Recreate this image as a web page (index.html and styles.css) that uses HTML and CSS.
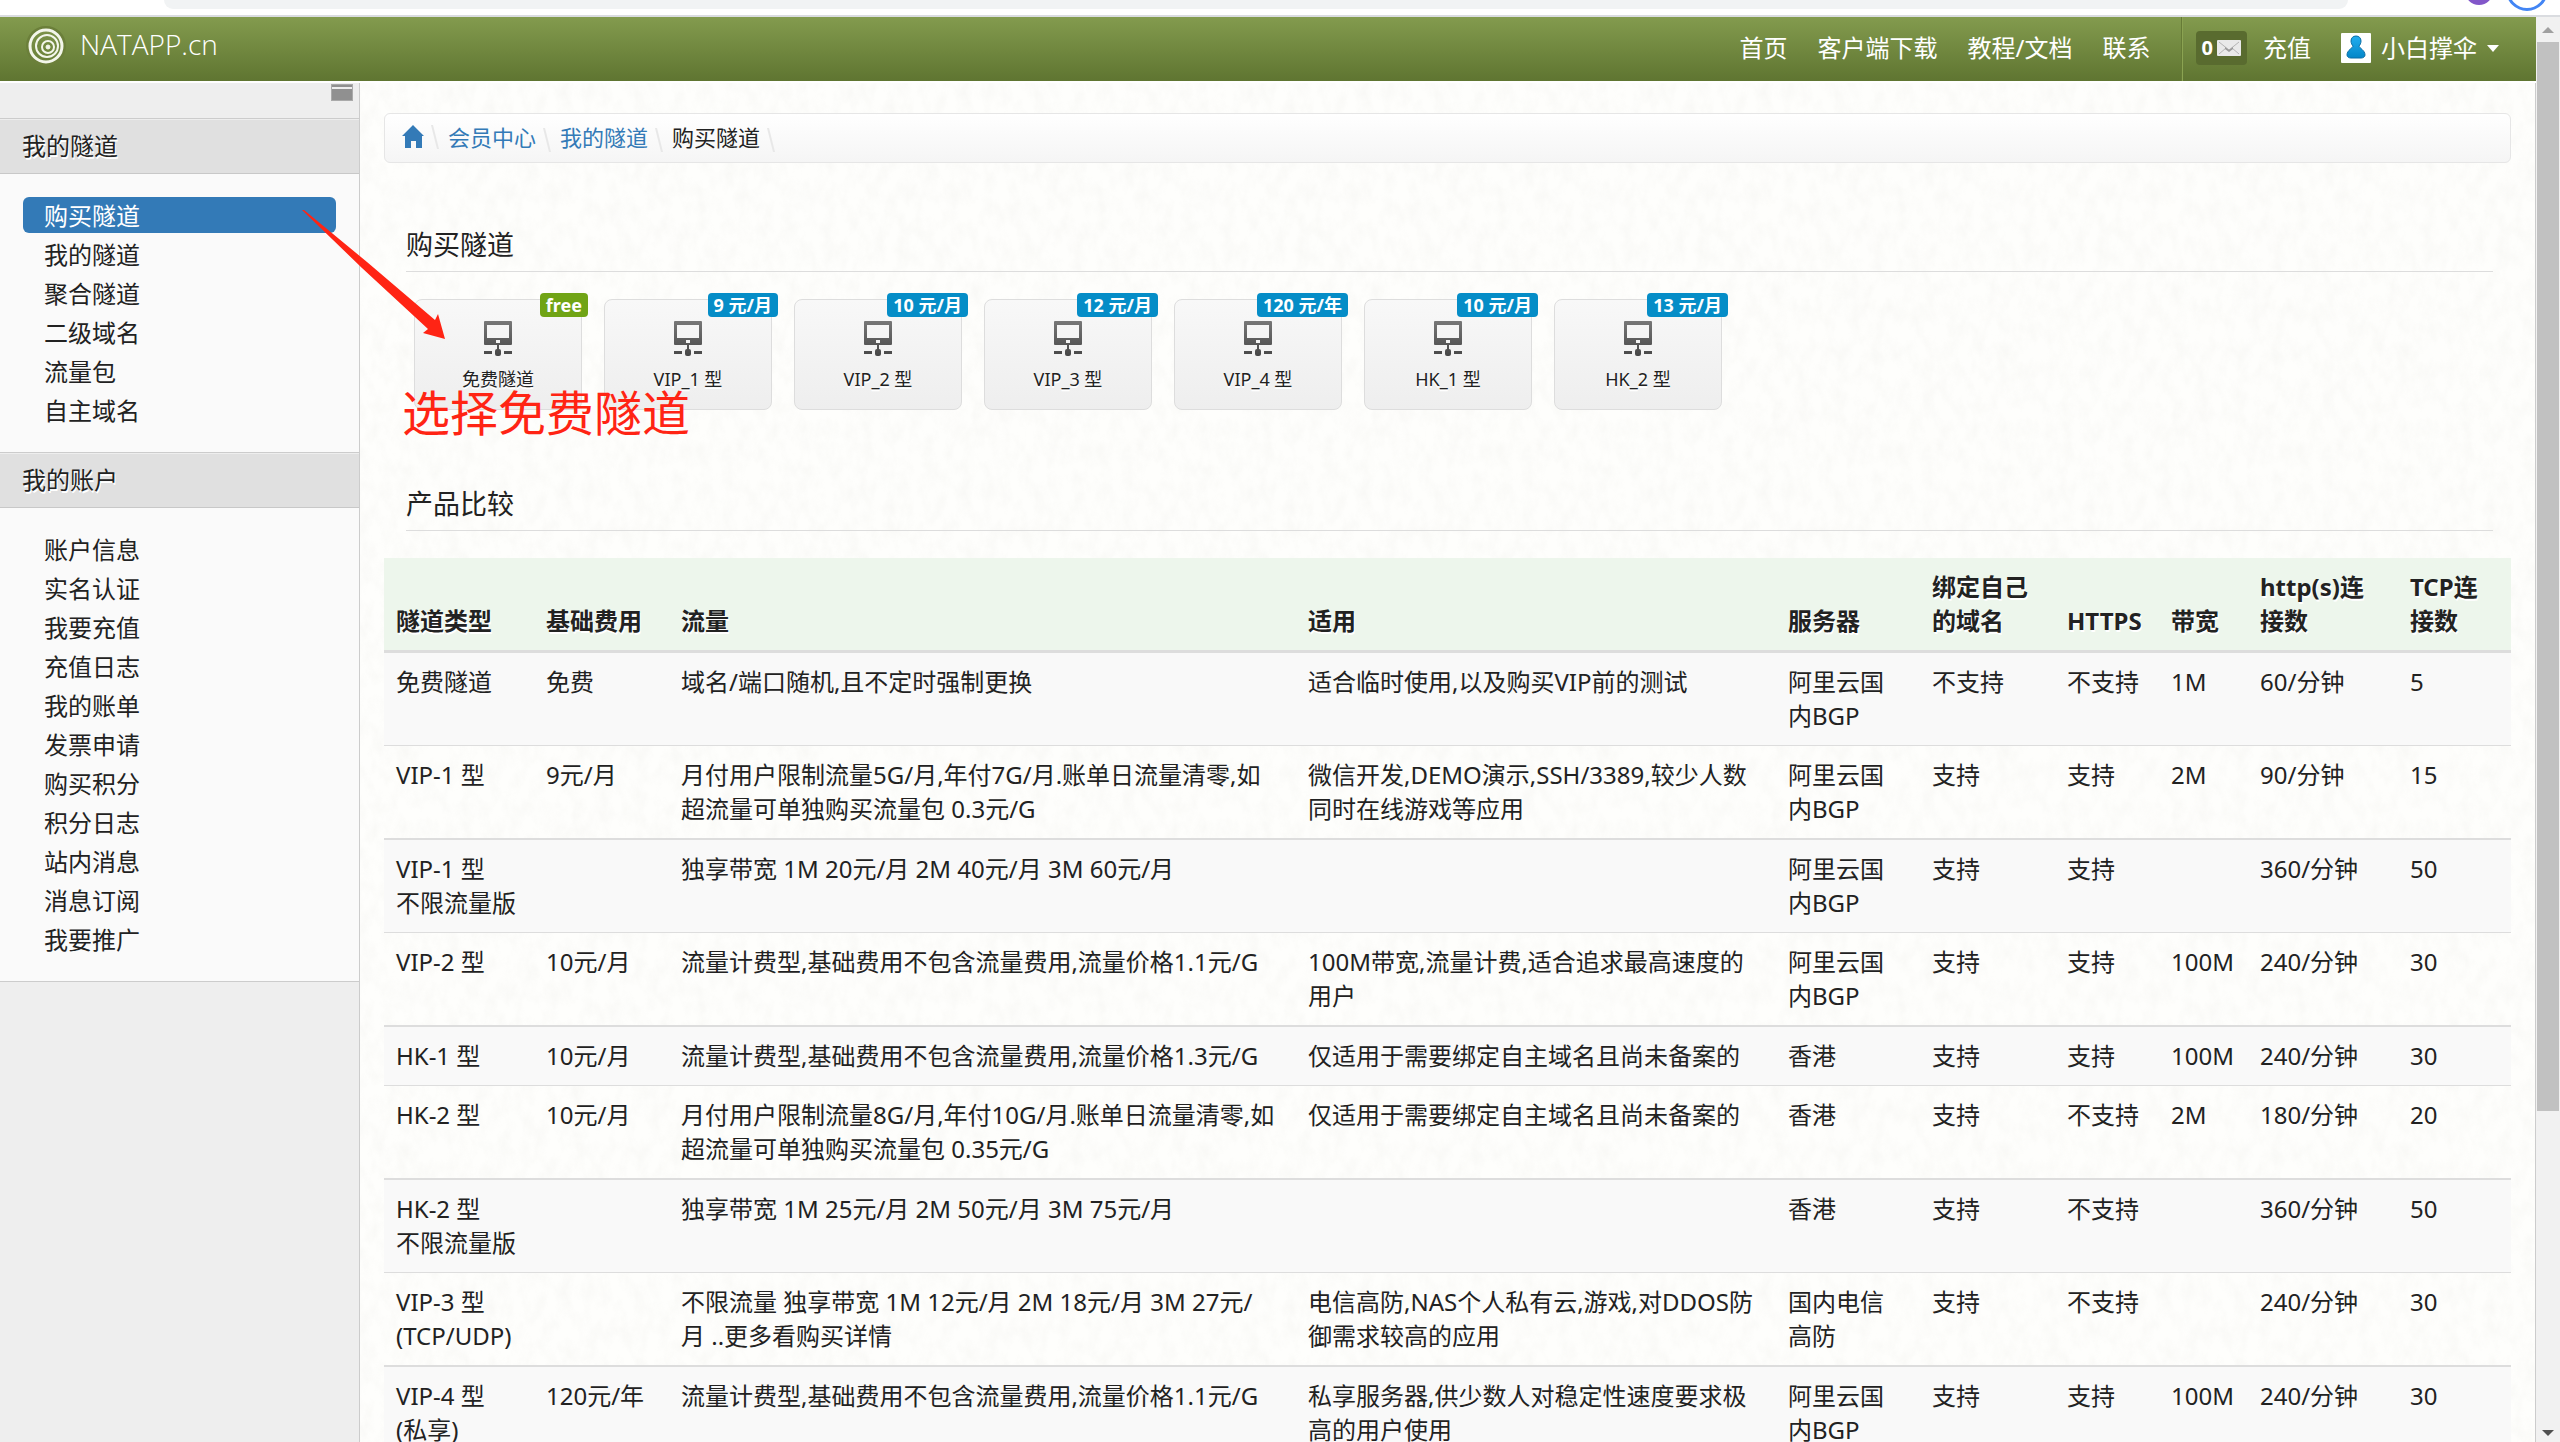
FILE: index.html
```html
<!DOCTYPE html>
<html lang="zh-CN">
<head>
<meta charset="utf-8">
<title>NATAPP.cn</title>
<link rel="stylesheet" href="styles.css">
</head>
<body>
<svg class="defs" width="0" height="0" aria-hidden="true">
  <defs>
    <linearGradient id="steel" x1="0" y1="0" x2="0" y2="1"><stop offset="0" stop-color="#777"/><stop offset="1" stop-color="#484848"/></linearGradient>
    <linearGradient id="blue" x1="0" y1="0" x2="0" y2="1"><stop offset="0" stop-color="#22aef0"/><stop offset="1" stop-color="#0486c8"/></linearGradient>
    <symbol id="monitor" viewBox="0 0 30 36">
      <path fill="url(#steel)" fill-rule="evenodd" d="M2 0h26q1 0 1 1v22q0 1-1 1H16v4q2 0 2 2v3q0 2-2 2h-2q-2 0-2-2v-3q0-2 2-2v-4H2q-1 0-1-1V1q0-1 1-1zM4 4v13h22V4zM13 19v3h4v-3zM1 30h8v3H1zM21 30h8v3h-8z"/>
    </symbol>
  </defs>
</svg>
<div class="browser-bar" aria-hidden="true"><div class="address"></div><span class="ext"></span><span class="profile"></span></div>
<div class="viewport">
  <div class="page">
    <header class="navbar">
      <a class="brand" href="#">
        <svg width="40" height="40" viewBox="0 0 40 40" fill="none" stroke="#f3f6ea"><circle cx="20" cy="20" r="18" stroke="#6b7f3a" stroke-width="4"/><circle cx="20" cy="20" r="16" stroke-width="3"/><circle cx="21" cy="20" r="11" stroke-width="2"/><circle cx="22" cy="21" r="6" stroke-width="2"/><circle cx="22" cy="21" r="2" fill="#f3f6ea"/></svg>
        <span>NATAPP.cn</span>
      </a>
      <nav class="topnav">
        <a href="#">首页</a><a href="#">客户端下载</a><a href="#">教程/文档</a><a href="#">联系</a>
      </nav>
      <div class="usernav">
        <a class="mail" href="#"><b>0</b><svg width="24" height="16" viewBox="0 0 24 16"><rect width="24" height="16" rx="1" fill="#e9e9e9"/><path d="M2 2l10 8L22 2M2 14l7-6M22 14l-7-6" fill="none" stroke="#b4b4b4"/><path d="M8 7l4 3 4-3v2l-4 3-4-3z" fill="#999"/></svg></a>
        <a class="charge" href="#">充值</a>
        <a class="user" href="#"><svg width="30" height="30" viewBox="0 0 30 30"><rect width="30" height="30" rx="1" fill="#fff"/><path d="M15 3c3 0 5 2 5 5 0 2-1 4-2 5 0 2 6 4 6 9 0 2-2 3-4 3H10c-2 0-4-1-4-3 0-5 6-7 6-9-1-1-2-3-2-5 0-3 2-5 5-5z" fill="url(#blue)" stroke="#0a6da5"/></svg><span>小白撑伞</span><i class="caret"></i></a>
      </div>
    </header>
    <div class="columns">
      <aside class="sidebar">
        <div class="toggle"><button type="button" aria-label="菜单"></button></div>
        <h2>我的隧道</h2>
        <ul>
          <li><a class="active" href="#">购买隧道</a></li><li><a href="#">我的隧道</a></li><li><a href="#">聚合隧道</a></li><li><a href="#">二级域名</a></li><li><a href="#">流量包</a></li><li><a href="#">自主域名</a></li>
        </ul>
        <h2>我的账户</h2>
        <ul>
          <li><a href="#">账户信息</a></li><li><a href="#">实名认证</a></li><li><a href="#">我要充值</a></li><li><a href="#">充值日志</a></li><li><a href="#">我的账单</a></li><li><a href="#">发票申请</a></li><li><a href="#">购买积分</a></li><li><a href="#">积分日志</a></li><li><a href="#">站内消息</a></li><li><a href="#">消息订阅</a></li><li><a href="#">我要推广</a></li>
        </ul>
      </aside>
      <main class="content">
        <nav class="breadcrumb">
          <a class="home" href="#" aria-label="首页"><svg width="22" height="24" viewBox="0 0 22 24"><path fill="#337ab7" d="M11 0l11 11h-2v12h-6v-7H9v7H3V11H0z"/></svg></a>
          <a href="#">会员中心</a><a href="#">我的隧道</a><span>购买隧道</span>
        </nav>
        <h1>购买隧道</h1>
        <div class="tiles">
          <a class="tile" href="#"><em class="free">free</em><svg width="30" height="36"><use href="#monitor"/></svg><span>免费隧道</span></a>
          <a class="tile" href="#"><em>9 元/月</em><svg width="30" height="36"><use href="#monitor"/></svg><span>VIP_1 型</span></a>
          <a class="tile" href="#"><em>10 元/月</em><svg width="30" height="36"><use href="#monitor"/></svg><span>VIP_2 型</span></a>
          <a class="tile" href="#"><em>12 元/月</em><svg width="30" height="36"><use href="#monitor"/></svg><span>VIP_3 型</span></a>
          <a class="tile" href="#"><em>120 元/年</em><svg width="30" height="36"><use href="#monitor"/></svg><span>VIP_4 型</span></a>
          <a class="tile" href="#"><em>10 元/月</em><svg width="30" height="36"><use href="#monitor"/></svg><span>HK_1 型</span></a>
          <a class="tile" href="#"><em>13 元/月</em><svg width="30" height="36"><use href="#monitor"/></svg><span>HK_2 型</span></a>
        </div>
        <h1>产品比较</h1>
        <table>
          <colgroup><col class="c1"><col class="c2"><col class="c3"><col class="c4"><col class="c5"><col class="c6"><col class="c7"><col class="c8"><col class="c9"><col class="c10"></colgroup>
          <thead><tr><th>隧道类型</th><th>基础费用</th><th>流量</th><th>适用</th><th>服务器</th><th>绑定自己<br>的域名</th><th>HTTPS</th><th>带宽</th><th>http(s)连<br>接数</th><th>TCP连<br>接数</th></tr></thead>
          <tbody>
            <tr><td>免费隧道</td><td>免费</td><td>域名/端口随机,且不定时强制更换</td><td>适合临时使用,以及购买VIP前的测试</td><td>阿里云国<br>内BGP</td><td>不支持</td><td>不支持</td><td>1M</td><td>60/分钟</td><td>5</td></tr>
            <tr><td>VIP-1 型</td><td>9元/月</td><td>月付用户限制流量5G/月,年付7G/月.账单日流量清零,如<br>超流量可单独购买流量包 0.3元/G</td><td>微信开发,DEMO演示,SSH/3389,较少人数<br>同时在线游戏等应用</td><td>阿里云国<br>内BGP</td><td>支持</td><td>支持</td><td>2M</td><td>90/分钟</td><td>15</td></tr>
            <tr><td>VIP-1 型<br>不限流量版</td><td></td><td>独享带宽 1M 20元/月 2M 40元/月 3M 60元/月</td><td></td><td>阿里云国<br>内BGP</td><td>支持</td><td>支持</td><td></td><td>360/分钟</td><td>50</td></tr>
            <tr><td>VIP-2 型</td><td>10元/月</td><td>流量计费型,基础费用不包含流量费用,流量价格1.1元/G</td><td>100M带宽,流量计费,适合追求最高速度的<br>用户</td><td>阿里云国<br>内BGP</td><td>支持</td><td>支持</td><td>100M</td><td>240/分钟</td><td>30</td></tr>
            <tr><td>HK-1 型</td><td>10元/月</td><td>流量计费型,基础费用不包含流量费用,流量价格1.3元/G</td><td>仅适用于需要绑定自主域名且尚未备案的</td><td>香港</td><td>支持</td><td>支持</td><td>100M</td><td>240/分钟</td><td>30</td></tr>
            <tr><td>HK-2 型</td><td>10元/月</td><td>月付用户限制流量8G/月,年付10G/月.账单日流量清零,如<br>超流量可单独购买流量包 0.35元/G</td><td>仅适用于需要绑定自主域名且尚未备案的</td><td>香港</td><td>支持</td><td>不支持</td><td>2M</td><td>180/分钟</td><td>20</td></tr>
            <tr><td>HK-2 型<br>不限流量版</td><td></td><td>独享带宽 1M 25元/月 2M 50元/月 3M 75元/月</td><td></td><td>香港</td><td>支持</td><td>不支持</td><td></td><td>360/分钟</td><td>50</td></tr>
            <tr><td>VIP-3 型<br>(TCP/UDP)</td><td></td><td>不限流量 独享带宽 1M 12元/月 2M 18元/月 3M 27元/<br>月 ..更多看购买详情</td><td>电信高防,NAS个人私有云,游戏,对DDOS防<br>御需求较高的应用</td><td>国内电信<br>高防</td><td>支持</td><td>不支持</td><td></td><td>240/分钟</td><td>30</td></tr>
            <tr><td>VIP-4 型<br>(私享)</td><td>120元/年</td><td>流量计费型,基础费用不包含流量费用,流量价格1.1元/G</td><td>私享服务器,供少数人对稳定性速度要求极<br>高的用户使用</td><td>阿里云国<br>内BGP</td><td>支持</td><td>支持</td><td>100M</td><td>240/分钟</td><td>30</td></tr>
          </tbody>
        </table>
        <svg class="arrow" width="144" height="131" viewBox="0 0 144 131" aria-hidden="true"><path fill="#ff2414" d="M0 0L2 0L65 52L133 110L136 104L143 129L121 123L126 119L60 58z"/></svg>
        <p class="note">选择免费隧道</p>
      </main>
    </div>
  </div>
  <div class="scrollbar" aria-hidden="true"><i class="up"></i><span class="thumb"></span><i class="down"></i></div>
</div>
</body>
</html>
```
FILE: styles.css
```css
* { box-sizing: border-box; }
html, body { height: 100%; margin: 0; }
body {
  display: flex;
  flex-direction: column;
  overflow: hidden;
  background: #fdfdfb;
  color: #222;
  font: 24px/34px "Noto Sans", "Noto Sans CJK SC", sans-serif;
}
a { color: inherit; text-decoration: none; }
ul { list-style: none; margin: 0; padding: 0; }
.defs { position: absolute; }

.browser-bar {
  flex: none;
  position: relative;
  height: 17px;
  overflow: hidden;
  background: #fff;
  border-bottom: 2px solid #dadce0;
}
.address { height: 9px; margin: 0 212px 0 164px; background: #f1f3f4; border-radius: 0 0 18px 18px; }
.ext, .profile { position: absolute; border-radius: 50%; }
.ext { right: 67px; bottom: 10px; width: 28px; height: 28px; background: #8257c9; }
.profile { right: 12px; bottom: 4px; width: 42px; height: 42px; border: 3px solid #4285f4; }

.viewport { flex: 1; min-height: 0; display: flex; }
.page { flex: 1; min-width: 0; display: flex; flex-direction: column; overflow: hidden; }

.navbar {
  flex: none;
  display: flex;
  align-items: stretch;
  height: 66px;
  padding: 0 37px 0 26px;
  background: linear-gradient(#839b4e, #5f7531);
  border-bottom: 2px solid #fff;
  color: #fff;
  white-space: nowrap;
}
.brand { display: flex; align-items: center; gap: 14px; margin-right: auto; padding-bottom: 6px; font-family: "Open Sans", sans-serif; font-size: 28px; font-weight: 300; }
.brand span { padding-bottom: 4px; }
.topnav { display: flex; align-items: center; gap: 30px; padding: 0 30px 2px 0; }
.usernav { display: flex; align-items: center; padding: 0 0 2px 14px; border-left: 1px solid #667b36; box-shadow: inset 1px 0 #8ba352; }
.mail { display: flex; align-items: center; gap: 4px; height: 34px; padding: 0 6px; background: #596b2f; border-radius: 4px; font-size: 20px; }
.charge { margin: 0 30px 0 16px; }
.user { display: flex; align-items: center; gap: 10px; }
.caret { border: 6px solid transparent; border-top: 7px solid #fff; border-bottom: 0; }

.columns { flex: 1; min-height: 0; display: flex; }
.sidebar { flex: none; width: 360px; background: #eee; border-right: 1px solid #ccc; }
.toggle { display: flex; justify-content: flex-end; height: 36px; padding: 1px 6px; border-bottom: 1px solid #ccc; }
.toggle button { width: 22px; height: 17px; padding: 0; border: 1px solid #aaa; background: linear-gradient(#909090 2px, #eee 2px, #eee 4px, #909090 4px); }
.sidebar h2 {
  margin: 0;
  padding: 10px 22px;
  background: #e0e0e0;
  border-bottom: 1px solid #c8c8c8;
  box-shadow: inset 0 1px #eee;
  font-size: 24px;
  font-weight: 400;
  text-shadow: 1px 2px #fff;
}
.sidebar ul { padding: 23px 23px 21px; background: #fafafa; border-bottom: 1px solid #ccc; }
.sidebar li { padding-bottom: 3px; }
.sidebar li a { display: block; height: 36px; padding: 0 21px; border-radius: 6px; line-height: 38px; }
.sidebar .active { background: #337ab7; color: #fff; }

/* faint paper grain */
.content {
  flex: 1;
  min-width: 0;
  position: relative;
  padding: 30px 24px 0;
  border-right: 1px solid #ccc;
  background: #fefefc url("data:image/svg+xml,%3Csvg xmlns='http://www.w3.org/2000/svg' width='400' height='400'%3E%3Cfilter id='n' x='0' y='0' width='100%25' height='100%25'%3E%3CfeTurbulence type='fractalNoise' baseFrequency='.08 .05' numOctaves='4' seed='7' stitchTiles='stitch'/%3E%3CfeColorMatrix values='0 0 0 0 .55 0 0 0 0 .54 0 0 0 0 .5 .16 0 0 0 -.06'/%3E%3C/filter%3E%3Crect width='400' height='400' filter='url(%23n)'/%3E%3C/svg%3E");
}
.breadcrumb {
  display: flex;
  align-items: center;
  height: 50px;
  padding: 0 17px 2px;
  border: 1px solid #e6e6e6;
  border-radius: 6px;
  background: linear-gradient(#fff, #f5f5f5);
  font-size: 22px;
}
.breadcrumb a { color: #337ab7; }
.breadcrumb > *::after { content: ""; display: inline-block; width: 2px; height: 24px; margin: 0 12px 0 10px; background: #e8e8e8; transform: skewX(14deg); vertical-align: middle; }
.home { display: flex; }
h1 {
  margin: 61px 18px 0 22px;
  padding: 4px 0 9px;
  border-bottom: 1px solid #ddd;
  font-size: 27px;
  font-weight: 400;
  line-height: 34px;
}
.tiles { display: flex; gap: 22px; padding: 27px 30px 12px; }
.tile {
  position: relative;
  display: flex;
  flex-direction: column;
  align-items: center;
  width: 168px;
  height: 111px;
  padding-top: 21px;
  border: 1px solid #ddd;
  border-radius: 8px;
  background: linear-gradient(#f8f8f8, #eee);
  font-size: 18px;
}
.tile span { margin-top: 5px; text-shadow: 0 2px #fff; }
.tile em {
  position: absolute;
  top: -7px;
  right: -7px;
  padding: 0 6px;
  border-radius: 4px;
  background: #058dc7;
  color: #fff;
  font: bold 18px/24px "Noto Sans", "Noto Sans CJK SC", sans-serif;
}
.tile .free { background: #70a415; }

table { width: 100%; margin-top: 27px; border-collapse: separate; border-spacing: 0; table-layout: fixed; }
.c1 { width: 150px; } .c2 { width: 135px; } .c4 { width: 480px; } .c5 { width: 144px; }
.c6 { width: 135px; } .c7 { width: 104px; } .c8 { width: 89px; } .c9 { width: 150px; } .c10 { width: 113px; }
th, td { padding: 12px; text-align: left; white-space: nowrap; vertical-align: top; }
th { border-bottom: 3px solid #ddd; background: #edf6ec; text-shadow: 1px 2px #fff; vertical-align: bottom; }
td { border-top: 1px solid #ddd; }
tbody tr:nth-child(odd) { background: #f9f9f9; }
tbody tr:nth-child(odd) td { border-top-width: 2px; }
tbody tr:first-child td { border-top: 0; }

.arrow { position: absolute; left: -58px; top: 127px; }
.note { position: absolute; left: 42px; top: 298px; margin: 0; color: #ff2414; font-size: 48px; line-height: 64px; }

.scrollbar { flex: none; display: flex; flex-direction: column; align-items: center; width: 24px; background: #f1f1f1; }
.scrollbar i { border: 6px solid transparent; }
.up { margin: 4px 0 9px; border-bottom-color: #a0a0a0 !important; }
.down { margin-bottom: 0; border-top-color: #505050 !important; }
.thumb { width: 22px; height: 75%; margin-bottom: auto; background: #c1c1c1; }
```
